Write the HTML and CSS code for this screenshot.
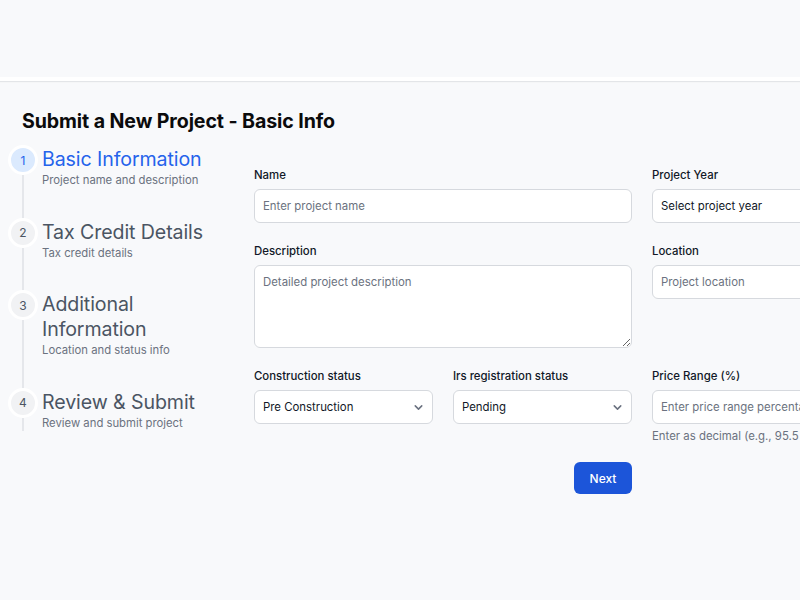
FILE: index.html
```html
<!DOCTYPE html>
<html lang="en">
<head>
<meta charset="utf-8">
<title>Submit a New Project</title>
<link rel="stylesheet" href="styles.css">
</head>
<body>
<header class="topbar"></header>
<main class="page">
  <h1 class="page-title">Submit a New Project - Basic Info</h1>
  <div class="layout">
    <ol class="steps">
      <li class="step active">
        <div class="marker"><span class="dot">1</span><span class="rail"></span></div>
        <div class="step-text">
          <div class="step-title">Basic Information</div>
          <div class="step-sub">Project name and description</div>
        </div>
      </li>
      <li class="step">
        <div class="marker"><span class="dot">2</span><span class="rail"></span></div>
        <div class="step-text">
          <div class="step-title">Tax Credit Details</div>
          <div class="step-sub">Tax credit details</div>
        </div>
      </li>
      <li class="step">
        <div class="marker"><span class="dot">3</span><span class="rail"></span></div>
        <div class="step-text">
          <div class="step-title">Additional<br>Information</div>
          <div class="step-sub">Location and status info</div>
        </div>
      </li>
      <li class="step">
        <div class="marker"><span class="dot">4</span><span class="rail"></span></div>
        <div class="step-text">
          <div class="step-title">Review &amp; Submit</div>
          <div class="step-sub">Review and submit project</div>
        </div>
      </li>
    </ol>

    <form class="form">
      <div class="field span2">
        <label class="label">Name</label>
        <input class="control" type="text" placeholder="Enter project name">
      </div>
      <div class="field span2">
        <label class="label">Project Year</label>
        <div class="control select"><span class="value">Select project year</span><svg class="chev" viewBox="0 0 12 12"><path d="M3 4.5l3 3 3-3" fill="none" stroke="currentColor" stroke-width="1.4" stroke-linecap="round" stroke-linejoin="round"/></svg></div>
      </div>

      <div class="field span2">
        <label class="label">Description</label>
        <textarea class="control area" placeholder="Detailed project description"></textarea>
      </div>
      <div class="field span2">
        <label class="label">Location</label>
        <input class="control" type="text" placeholder="Project location">
      </div>

      <div class="field">
        <label class="label">Construction status</label>
        <div class="control select"><span class="value">Pre Construction</span><svg class="chev" viewBox="0 0 12 12"><path d="M3 4.5l3 3 3-3" fill="none" stroke="currentColor" stroke-width="1.4" stroke-linecap="round" stroke-linejoin="round"/></svg></div>
      </div>
      <div class="field">
        <label class="label">Irs registration status</label>
        <div class="control select"><span class="value">Pending</span><svg class="chev" viewBox="0 0 12 12"><path d="M3 4.5l3 3 3-3" fill="none" stroke="currentColor" stroke-width="1.4" stroke-linecap="round" stroke-linejoin="round"/></svg></div>
      </div>
      <div class="field span2">
        <label class="label">Price Range (%)</label>
        <input class="control" type="text" placeholder="Enter price range percentage">
        <div class="hint">Enter as decimal (e.g., 95.5 for 95.5%)</div>
      </div>

      <div class="actions span2">
        <button class="btn" type="button">Next</button>
      </div>
    </form>
  </div>
</main>
</body>
</html>
```
FILE: styles.css
```css
html, body {
  margin: 0;
  padding: 0;
  overflow: hidden;
}
body {
  background: #f8f9fb;
  font-family: Inter, "Noto Sans", "Liberation Sans", sans-serif;
  color: #111827;
  width: 800px;
  height: 600px;
}
.topbar {
  height: 77px;
  background: #f8f9fb;
  border-bottom: 4px solid #ffffff;
  box-shadow: 0 1px 1px #e3e5e8;
}
.page {
  padding: 26px 0 0 8px;
}
.page-title {
  margin: 0 0 12px 14px;
  font-size: 19.6px;
  line-height: 28px;
  font-weight: 700;
  color: #0b0b0c;
  letter-spacing: -0.1px;
}
.layout {
  display: flex;
  align-items: flex-start;
  gap: 18px;
  width: 1100px;
}
.steps {
  list-style: none;
  margin: 0;
  padding: 0;
  width: 228px;
  flex: none;
}
.step {
  display: flex;
  gap: 4px;
  padding-bottom: 31.6px;
}
.step:last-child {
  padding-bottom: 0;
}
.marker {
  display: flex;
  flex-direction: column;
  align-items: center;
  width: 30px;
  flex: none;
  margin-top: -2px;
  margin-bottom: -31.6px;
}
.step:last-child .marker {
  margin-bottom: 0;
}
.dot {
  width: 24px;
  height: 24px;
  border: 3px solid #ffffff;
  border-radius: 50%;
  background: #f1f2f4;
  color: #4b5563;
  font-size: 12px;
  display: flex;
  align-items: center;
  justify-content: center;
  flex: none;
}
.rail {
  flex: 1;
  width: 2px;
  background: #e5e7eb;
  margin-left: -1px;
}
.step.active .dot {
  background: #dbeafe;
  color: #2563eb;
}
.step-title {
  font-size: 19.6px;
  line-height: 25px;
  color: #4b5563;
  font-weight: 400;
  letter-spacing: -0.1px;
}
.step.active .step-title {
  color: #2563eb;
}
.step-sub {
  font-size: 11.3px;
  line-height: 16px;
  color: #6b7280;
}
.form {
  display: grid;
  grid-template-columns: repeat(4, 179px);
  column-gap: 20px;
  row-gap: 20px;
  padding-top: 20px;
  align-items: start;
}
.span2 {
  grid-column: span 2;
}
.field {
  display: flex;
  flex-direction: column;
}
.label {
  font-size: 11.4px;
  line-height: 16px;
  font-weight: 500;
  color: #111827;
  margin-bottom: 6px;
}
.control {
  box-sizing: border-box;
  height: 34px;
  width: 100%;
  border: 1px solid #d6d9de;
  border-radius: 6px;
  background: #ffffff;
  font-family: inherit;
  font-size: 11.4px;
  color: #111827;
  padding: 0 8px;
  outline: none;
}
.control::placeholder {
  color: #6b7280;
}
.area {
  height: 83px;
  padding: 8px 8px;
  resize: vertical;
  line-height: 16px;
}
.select {
  display: flex;
  align-items: center;
  justify-content: space-between;
}
.value {
  color: #111827;
}
.chev {
  width: 13px;
  height: 13px;
  color: #6b7280;
  margin-right: -1px;
}
.hint {
  font-size: 11.4px;
  line-height: 16px;
  color: #6b7280;
  margin-top: 4px;
}
.actions {
  display: flex;
  justify-content: flex-end;
  margin-top: -2px;
}
.btn {
  height: 32px;
  width: 58px;
  border: none;
  border-radius: 6px;
  background: #1c55d9;
  color: #ffffff;
  font-family: inherit;
  font-size: 12px;
  font-weight: 500;
}
```
